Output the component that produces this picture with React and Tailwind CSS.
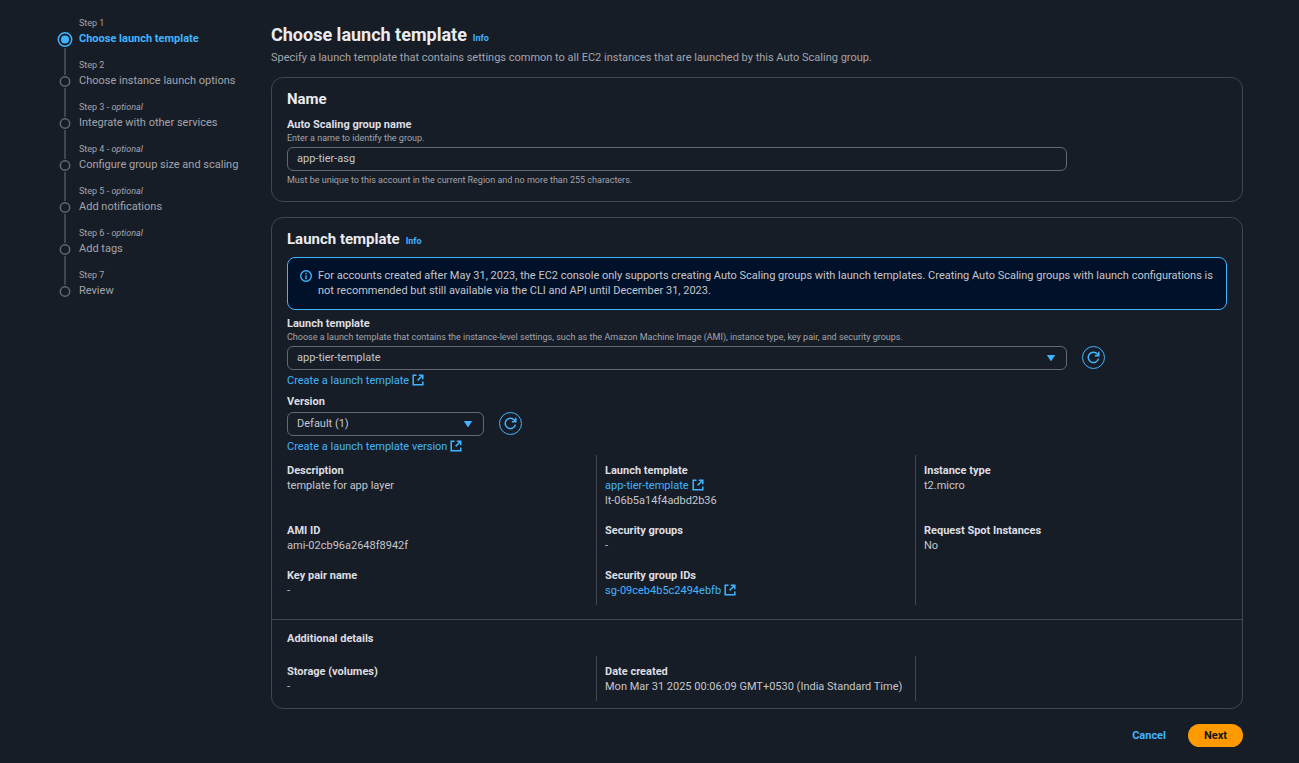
import React, { useState } from "react";

const steps = [
  { title: "Choose launch template" },
  { title: "Choose instance launch options" },
  { title: "Integrate with other services", optional: true },
  { title: "Configure group size and scaling", optional: true },
  { title: "Add notifications", optional: true },
  { title: "Add tags", optional: true },
  { title: "Review" },
];

const detailColumns = [
  [
    { label: "Description", value: "template for app layer" },
    { label: "AMI ID", value: "ami-02cb96a2648f8942f" },
    { label: "Key pair name", value: "-" },
  ],
  [
    { label: "Launch template", link: "app-tier-template", value: "lt-06b5a14f4adbd2b36" },
    { label: "Security groups", value: "-" },
    { label: "Security group IDs", link: "sg-09ceb4b5c2494ebfb" },
  ],
  [
    { label: "Instance type", value: "t2.micro" },
    { label: "Request Spot Instances", value: "No" },
  ],
];

const additionalColumns = [
  [{ label: "Storage (volumes)", value: "-" }],
  [{ label: "Date created", value: "Mon Mar 31 2025 00:06:09 GMT+0530 (India Standard Time)" }],
  [],
];

function ExternalIcon() {
  return (
    <svg className="ml-[3px] inline-block h-3 w-3 align-[-2px]" viewBox="0 0 12 12" fill="none" stroke="currentColor" strokeWidth="1.5" aria-hidden="true">
      <path d="M4.5 1.2H1.2v9.6h9.6V7.5" />
      <path d="M6.8 1.2h4v4M10.8 1.2L5.6 6.4" />
    </svg>
  );
}

function ExternalLink({ children }) {
  return (
    <a href="#" className="text-[#42b4ff] hover:text-[#75cfff]">
      {children}
      <ExternalIcon />
    </a>
  );
}

function InfoLink() {
  return (
    <a href="#" className="text-[9px] leading-3 font-bold text-[#42b4ff]">
      Info
    </a>
  );
}

function RefreshButton({ label }) {
  return (
    <button
      type="button"
      aria-label={label}
      className="flex h-[23px] w-[23px] shrink-0 items-center justify-center rounded-full border border-[#42b4ff] text-[#42b4ff]"
    >
      <svg className="h-[13px] w-[13px]" viewBox="0 0 13 13" fill="none" stroke="currentColor" strokeWidth="1.5" aria-hidden="true">
        <path d="M11.5 7.6a5.2 5.2 0 1 1-1.1-4.6l1 1.3" />
        <path d="M11.8 0.8v4H7.8" />
      </svg>
    </button>
  );
}

function Select({ id, value, className }) {
  return (
    <div className={`relative ${className}`}>
      <select
        id={id}
        defaultValue={value}
        className="block h-6 w-full appearance-none rounded-md border border-[#656871] bg-[#161d26] px-[9px] pb-0.5 text-[#c6c6cd]"
      >
        <option>{value}</option>
      </select>
      <svg className="pointer-events-none absolute top-2 right-3 h-2 w-2" viewBox="0 0 8 8" fill="#42b4ff" aria-hidden="true">
        <path d="M0.4 1h7.2a0.4 0.4 0 0 1 0.3 0.6L4.6 6.6a0.7 0.7 0 0 1-1.2 0L0.1 1.6A0.4 0.4 0 0 1 0.4 1z" />
      </svg>
    </div>
  );
}

function StepNav() {
  return (
    <nav aria-label="Steps" className="w-[215px] shrink-0">
      <ol>
        {steps.map((step, i) => {
          const active = i === 0;
          const last = i === steps.length - 1;
          return (
            <li key={step.title} className="flex h-[42px] gap-[5px]">
              <div className="flex w-[18px] flex-col items-center">
                {active ? (
                  <>
                    <span className="h-4 shrink-0" />
                    <svg className="h-[15px] w-4 shrink-0" viewBox="0 0 16 15" aria-hidden="true">
                      <circle cx="8" cy="7.5" r="6.7" fill="none" stroke="#42b4ff" strokeWidth="1.5" />
                      <circle cx="8" cy="7.5" r="4" fill="#42b4ff" />
                    </svg>
                  </>
                ) : (
                  <>
                    <span className="mb-px h-[17px] w-0.5 shrink-0 bg-[#424650]" />
                    <svg className="h-[11px] w-3 shrink-0" viewBox="0 0 12 11" aria-hidden="true">
                      <circle cx="6" cy="5.5" r="4.7" fill="none" stroke="#656871" strokeWidth="1.5" />
                    </svg>
                  </>
                )}
                {!last && <span className="mt-px w-0.5 flex-1 bg-[#424650]" />}
              </div>
              <div>
                <div className="text-[9px] leading-[14px] text-[#a4a4ad]">
                  Step {i + 1}
                  {step.optional && (
                    <>
                      {" - "}
                      <i>optional</i>
                    </>
                  )}
                </div>
                <a
                  href="#"
                  aria-current={active ? "step" : undefined}
                  className={`mt-px block ${active ? "font-bold text-[#42b4ff]" : "text-[#a4a4ad]"}`}
                >
                  {step.title}
                </a>
              </div>
            </li>
          );
        })}
      </ol>
    </nav>
  );
}

function Details({ columns, rows }) {
  return (
    <div className="-mr-[7px] -ml-2.5 grid grid-cols-3">
      {columns.map((items, i) => (
        <dl key={i} className={i === 0 ? "pt-2 pl-2.5" : "border-l border-[#424650] pt-2 pl-2"}>
          {items.map((item, row) => (
            <div key={item.label} className={rows[row]}>
              <dt className="font-bold text-[#dedee3]">{item.label}</dt>
              {item.link && (
                <dd>
                  <ExternalLink>{item.link}</ExternalLink>
                </dd>
              )}
              {item.value && <dd>{item.value}</dd>}
            </div>
          ))}
        </dl>
      ))}
    </div>
  );
}

function App() {
  const [name, setName] = useState("app-tier-asg");

  return (
    <div className="flex min-h-screen bg-[#161d26] px-14 pt-4 font-['Roboto',sans-serif] text-[11px] leading-[15px] text-[#c6c6cd]">
      <StepNav />
      <main className="min-w-0 flex-1 pt-2">
        <div className="flex items-baseline gap-1.5">
          <h1 className="text-[18px] leading-[22px] font-bold text-[#ebebf0]">Choose launch template</h1>
          <InfoLink />
        </div>
        <p className="mt-1 text-[#a4a4ad]">
          Specify a launch template that contains settings common to all EC2 instances that are launched by this Auto Scaling group.
        </p>

        <section className="mt-3 rounded-xl border border-[#424650] px-[15px] pt-3 pb-[14px]">
          <h2 className="text-[15px] leading-[18px] font-bold text-[#ebebf0]">Name</h2>
          <label htmlFor="group-name" className="mt-[9px] block font-bold text-[#dedee3]">
            Auto Scaling group name
          </label>
          <p className="text-[9px] leading-[13px] text-[#a4a4ad]">Enter a name to identify the group.</p>
          <input
            id="group-name"
            type="text"
            value={name}
            onChange={(e) => setName(e.target.value)}
            className="mt-0.5 block h-6 w-[83%] rounded-md border border-[#656871] px-[9px] pb-0.5 text-[#c6c6cd]"
          />
          <p className="mt-[3px] text-[9px] leading-[13px] text-[#a4a4ad]">
            Must be unique to this account in the current Region and no more than 255 characters.
          </p>
        </section>

        <section className="mt-[15px] rounded-xl border border-[#424650]">
          <div className="px-[15px] pt-3 pb-3.5">
            <div className="flex items-baseline gap-1.5">
              <h2 className="text-[15px] leading-[18px] font-bold text-[#ebebf0]">Launch template</h2>
              <InfoLink />
            </div>
            <div className="mt-[9px] flex gap-1.5 rounded-lg border border-[#42b4ff] bg-[#001129] px-3 pt-[10px] pb-[11px]">
              <svg className="mt-0.5 h-3 w-3 shrink-0" viewBox="0 0 12 12" fill="none" stroke="#42b4ff" strokeWidth="1.4" aria-hidden="true">
                <circle cx="6" cy="6" r="5.3" />
                <path d="M6 2.8v1.4M6 5.2v4" />
              </svg>
              <p>
                For accounts created after May 31, 2023, the EC2 console only supports creating Auto Scaling groups with launch templates. Creating Auto Scaling groups with launch configurations is not recommended but still available via the CLI and API until December 31, 2023.
              </p>
            </div>

            <label htmlFor="template" className="mt-1.5 block font-bold text-[#dedee3]">
              Launch template
            </label>
            <p className="text-[9px] leading-[13px] text-[#a4a4ad]">
              Choose a launch template that contains the instance-level settings, such as the Amazon Machine Image (AMI), instance type, key pair, and security groups.
            </p>
            <div className="mt-0.5 flex gap-[15px]">
              <Select id="template" value="app-tier-template" className="w-[83%]" />
              <RefreshButton label="Refresh launch templates" />
            </div>
            <div className="mt-[3px]">
              <ExternalLink>Create a launch template</ExternalLink>
            </div>

            <label htmlFor="version" className="mt-1.5 block font-bold text-[#dedee3]">
              Version
            </label>
            <div className="mt-[3px] flex gap-[15px]">
              <Select id="version" value="Default (1)" className="w-[21%]" />
              <RefreshButton label="Refresh versions" />
            </div>
            <div className="mt-[3px] mb-px">
              <ExternalLink>Create a launch template version</ExternalLink>
            </div>

            <Details columns={detailColumns} rows={["h-[60px]", "h-[45px]", "h-[37px]"]} />
          </div>

          <div className="border-t border-[#424650] px-[15px] pt-[11px] pb-[7px]">
            <h3 className="mb-[10px] font-bold text-[#dedee3]">Additional details</h3>
            <Details columns={additionalColumns} rows={["h-[37px]"]} />
          </div>
        </section>

        <div className="mt-[15px] flex items-center justify-end gap-[22px]">
          <a href="#" className="font-bold text-[#42b4ff]">
            Cancel
          </a>
          <button type="button" className="h-[23px] rounded-full bg-[#ff9900] px-4 font-bold text-[#0f141a]">
            Next
          </button>
        </div>
      </main>
    </div>
  );
}

export default App;
